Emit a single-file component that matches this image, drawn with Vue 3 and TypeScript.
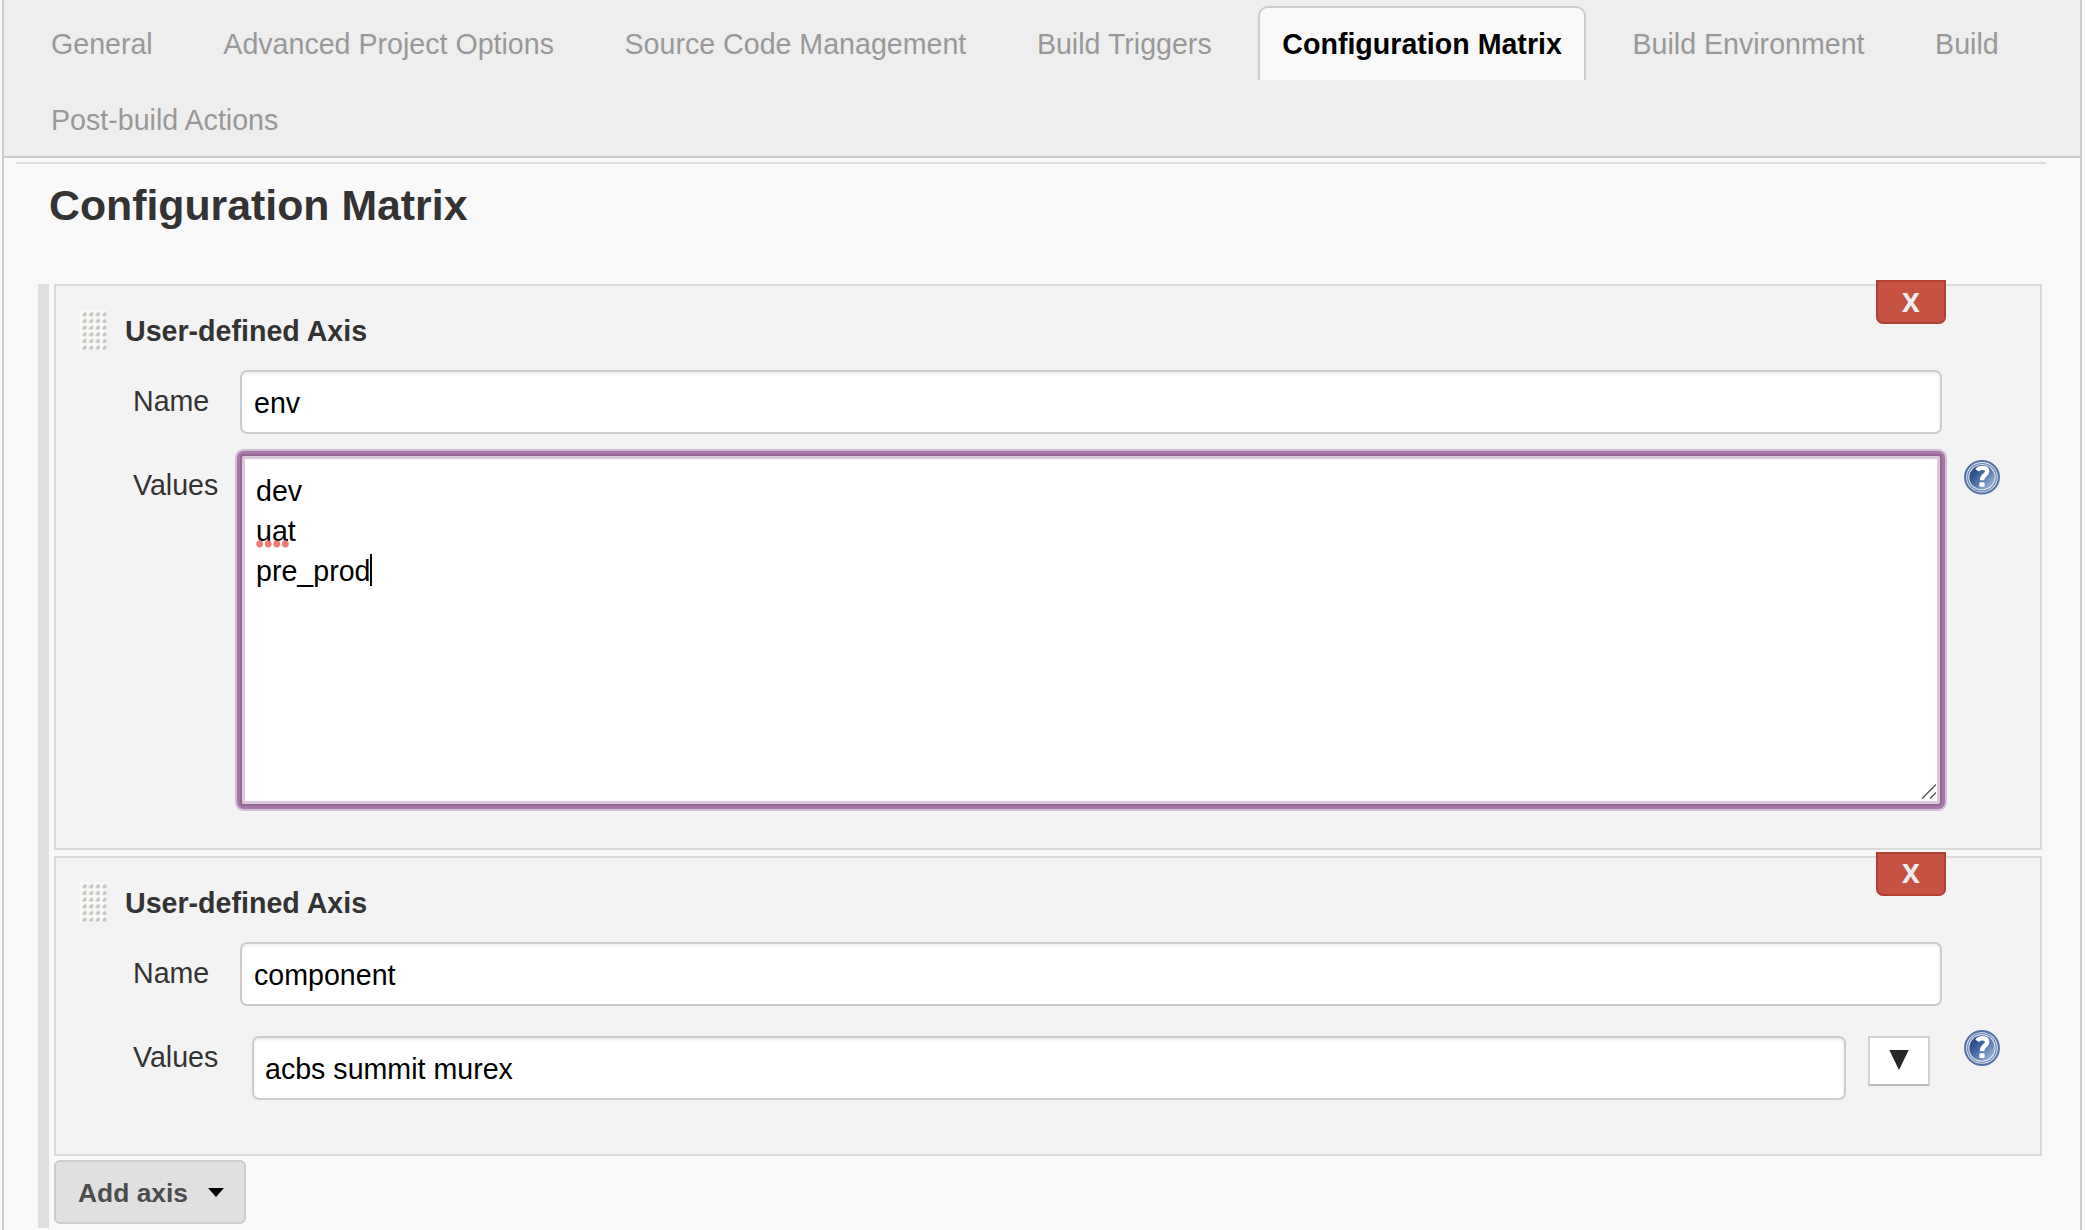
<script setup lang="ts">
interface Tab { label: string; active?: boolean }
interface Axis { id: string; name: string; values: string[]; expanded: boolean }

const tabs: Tab[] = [
  { label: 'General' },
  { label: 'Advanced Project Options' },
  { label: 'Source Code Management' },
  { label: 'Build Triggers' },
  { label: 'Configuration Matrix', active: true },
  { label: 'Build Environment' },
  { label: 'Build' },
  { label: 'Post-build Actions' },
]

const axes: Axis[] = [
  { id: 'a', name: 'env', values: ['dev', 'uat', 'pre_prod'], expanded: true },
  { id: 'b', name: 'component', values: ['acbs', 'summit', 'murex'], expanded: false },
]

const misspelled = ['uat']
</script>

<template>
  <div class="page">
    <nav class="tabs">
      <div v-for="t in tabs" :key="t.label" class="tab" :class="{ active: t.active }"><span>{{ t.label }}</span></div>
    </nav>
    <main class="content">
      <hr class="rule" />
      <h1>Configuration Matrix</h1>
      <div class="group">
        <section v-for="a in axes" :key="a.id" class="axis" :class="{ expanded: a.expanded }">
          <button class="remove">X</button>
          <header class="head">
            <svg class="grip" width="28" height="40" viewBox="0 0 28 40">
              <defs>
                <pattern :id="'dots-' + a.id" width="6.667" height="6.667" patternUnits="userSpaceOnUse">
                  <rect width="6.667" height="6.667" fill="#fafaf9" />
                  <path d="M2 6.2V4.4L4.4 2H6.6V6.2Z" fill="#dededc" />
                  <path d="M2.8 6V4.8L5 2.6H6.2V6Z" fill="#c2c2be" />
                </pattern>
              </defs>
              <rect width="26.7" height="40" :fill="`url(#dots-${a.id})`" />
            </svg>
            <b>User-defined Axis</b>
          </header>
          <div class="row name-row">
            <label>Name</label>
            <div class="field">{{ a.name }}</div>
          </div>
          <div class="row values-row">
            <label>Values</label>
            <div v-if="a.expanded" class="area">
              <div v-for="(v, i) in a.values" :key="v" class="line">
                <span class="word">{{ v }}<svg v-if="misspelled.includes(v)" class="spell" width="36" height="8" viewBox="0 0 36 8"><circle v-for="n in 4" :key="n" :cx="n * 8.55 - 4.9" cy="4" r="3.4" fill="#ef7b70" /></svg></span><i v-if="i === a.values.length - 1" class="caret"></i>
              </div>
              <svg class="resize" width="16" height="16" viewBox="0 0 16 16"><path d="M2 15.5L16 1.5M10 15.5L16 9.5" stroke="#555" stroke-width="1.4" /></svg>
            </div>
            <template v-else>
              <div class="field short">{{ a.values.join(' ') }}</div>
              <button class="expand"><svg width="20" height="20" viewBox="0 0 20 20"><path d="M0.3 0H19.7L10 20Z" fill="#262626" /></svg></button>
            </template>
            <svg class="help" width="36" height="36" viewBox="0 0 36 36" preserveAspectRatio="none">
              <defs>
                <linearGradient :id="'blue-' + a.id" x1="0.1" y1="0.1" x2="0.9" y2="0.9">
                  <stop offset="0.2" stop-color="#2f5191" /><stop offset="0.55" stop-color="#5577ab" /><stop offset="1" stop-color="#9dbbe0" />
                </linearGradient>
              </defs>
              <circle cx="18" cy="18" r="16.9" fill="#e4e9f2" stroke="#5573a8" stroke-width="2.1" />
              <circle cx="18" cy="18" r="14.3" fill="#f0f3f8" stroke="#7089b5" stroke-width="1.3" />
              <circle cx="18" cy="18" r="12.7" :fill="`url(#blue-${a.id})`" />
              <path d="M13.2 10.8C15 7.6 23.2 7 23.2 11.9C23.2 15.6 18 15.6 18 21.2" fill="none" stroke="#fff" stroke-width="4.4" />
              <rect x="15.4" y="23.2" width="5.2" height="4.8" rx="0.8" fill="#fff" />
            </svg>
          </div>
        </section>
        <button class="add"><span>Add axis</span><svg width="16" height="9" viewBox="0 0 16 9"><path d="M0 0H16L8 9Z" fill="#000" /></svg></button>
      </div>
    </main>
  </div>
</template>

<style>
body { background: #f9f9f9; overflow: hidden; }
</style>
<style scoped>
* { box-sizing: border-box; }
.page {
  width: 2080px; height: 1230px; margin-left: 2px; overflow: hidden;
  border: solid #ccc; border-width: 0 2px;
  background: #f9f9f9; color: #333;
  font: 28.6px/40px "Liberation Sans", Arial, sans-serif;
}
button { font: inherit; margin: 0; padding: 0; }
.tabs {
  display: flex; flex-wrap: wrap; align-content: flex-start; column-gap: 22.6px; row-gap: 2px;
  height: 158px; padding: 6px 23px 0; background: #eee; border-bottom: 2px solid #ccc; color: #999;
}
.tab { height: 74px; padding: 16px 22px 0; border: 2px solid transparent; border-bottom: 0; white-space: nowrap; }
.tab.active { background: #f9f9f9; border-color: #ccc; border-radius: 10px 10px 0 0; color: #000; font-weight: bold; }
.content { padding: 4px 34px 0 12px; }
.rule { margin: 0; border: 0; height: 2px; background: #ddd; }
h1 { margin: 16px 0 0 33px; font-size: 42.8px; line-height: 50px; height: 104px; }
.group { margin-left: 22px; width: 2003px; height: 944px; border-left: 11px solid #e0e0e0; padding-left: 5px; }
.axis { position: relative; width: 1988px; height: 300px; padding: 0 0 0 24px; background: #f3f3f3; border: 2px solid #dadada; }
.axis.expanded { height: 566px; margin-bottom: 6px; }
.remove {
  position: absolute; top: -6px; right: 94px; width: 70px; height: 44px; padding-bottom: 3px;
  background: #c55242; border: 2px solid #b04030; border-radius: 0 0 7px 7px;
  color: #eee; font: bold 26.6px/36px "Noto Sans", sans-serif;
}
.expanded .remove { padding: 0; line-height: 40px; }
.head { display: flex; padding-top: 24px; height: 84px; }
.head b { margin: 1px 0 0 17px; }
.row { display: flex; align-items: flex-start; width: 1920px; }
.row label { flex: none; width: 160px; padding-left: 53px; margin-top: 11px; }
.name-row { height: 84px; }
.field {
  flex: none; width: 1702px; height: 64px; padding: 12px; background: #fff; border: 2px solid #ccc; border-radius: 7px;
  box-shadow: inset 0 2px 3px #eee; color: #000; line-height: 38px;
}
.field.short { width: 1594px; margin: 10px 0 0 12px; padding-left: 11px; }
.area {
  flex: none; position: relative; width: 1702px; height: 352px; padding: 15px 14px;
  border: 2px solid #966796; border-radius: 4px; background: #fff; color: #000;
  box-shadow: inset 0 0 0 3px #dcc8de, 0 0 0 3px #a777a9, 0 0 0 5px #d2bdd5;
}
.line { height: 40px; display: flex; }
.word { position: relative; }
.spell { position: absolute; left: 0; top: 29px; }
.caret { width: 2px; height: 32px; background: #000; margin-top: 3px; }
.resize { position: absolute; right: 4px; bottom: 5px; }
.help { flex: none; margin: 4px 0 0 auto; }
.expanded .help { margin-top: 6px; height: 34.5px; }
.expand { flex: none; display: flex; justify-content: center; padding-top: 12px; width: 62px; height: 50px; margin: 10px 0 0 22px; background: #fff; border: 2px solid #d2d2d2; border-bottom-color: #bbb; }
.add { display: flex; align-items: center; width: 192px; height: 64px; margin-top: 4px; padding-left: 22px; gap: 20px; background: #e0e0e0; border: 2px solid #ccc; border-radius: 6px; color: #4d4d4d; font-weight: bold; font-size: 26.4px; }
.add span { padding-top: 2px; }
</style>
